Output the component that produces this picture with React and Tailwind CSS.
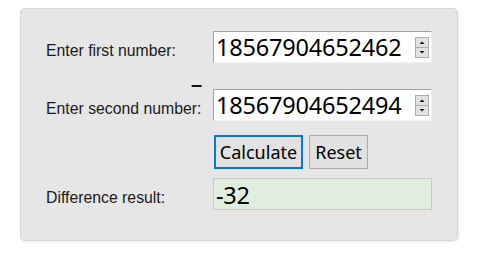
import React, { useState } from "react";

const labelFont = { fontFamily: '"Liberation Sans", Arial, sans-serif' };
const fieldFont = { fontFamily: '"Noto Sans", "Open Sans", sans-serif' };

function Spinner() {
  return (
    <svg width="14" height="21" viewBox="0 0 14 21" className="ml-auto mr-[2px] shrink-0">
      <rect x="0.5" y="0.5" width="13" height="20" fill="#e3e3e3" stroke="#acacac" />
      <line x1="0.5" y1="10.5" x2="13.5" y2="10.5" stroke="#acacac" />
      <polygon points="4.5,7 7,4.5 9.5,7" fill="#111" />
      <polygon points="4.5,14 9.5,14 7,16.5" fill="#111" />
    </svg>
  );
}

function NumberBox({ value }) {
  return (
    <div className="flex items-center w-[219px] h-[32px] bg-white border border-t-[#a3a3a3] border-l-[#a3a3a3] border-r-[#f0f0f0] border-b-[#f0f0f0]">
      <span
        className="pl-[2px] text-[23.5px] leading-[30px] tracking-[-0.2px] text-black"
        style={fieldFont}
      >
        {value}
      </span>
      <Spinner />
    </div>
  );
}

function Label({ children }) {
  return (
    <div className="w-[167px] shrink-0 pt-[11px] text-[15.8px] leading-[18px] text-[#1a1a1a]" style={labelFont}>
      {children}
    </div>
  );
}

export default function App() {
  const [first] = useState("18567904652462");
  const [second] = useState("18567904652494");
  const result = "-32";

  return (
    <div className="w-[480px] h-[255px] bg-white pt-[8px] pl-[20px]">
      <div className="w-[438px] h-[233px] rounded-[5px] border border-[#d6d6d6] bg-[#e6e6e6] shadow-[1px_1px_2px_rgba(0,0,0,0.08)] pt-[22px] pl-[25px]">
        {/* first operand */}
        <div className="flex h-[32px]">
          <Label>Enter first number:</Label>
          <NumberBox value={first} />
        </div>

        {/* operator */}
        <div className="h-[26px] pl-[145px] pt-[11px]">
          <span className="block text-[20px] leading-[20px] font-bold text-[#111]" style={labelFont}>
            –
          </span>
        </div>

        {/* second operand */}
        <div className="flex h-[32px]">
          <Label>Enter second number:</Label>
          <NumberBox value={second} />
        </div>

        {/* actions */}
        <div className="flex gap-[6px] mt-[14px] pl-[168px]" style={fieldFont}>
          <button className="w-[89px] h-[34px] bg-[#e1e1e1] border-2 border-[#0078d7] text-[18px] leading-[24px] text-black">
            Calculate
          </button>
          <button className="w-[59px] h-[34px] bg-[#e1e1e1] border border-[#adadad] text-[18px] leading-[24px] text-black">
            Reset
          </button>
        </div>

        {/* result */}
        <div className="flex h-[32px] mt-[9px]">
          <Label>Difference result:</Label>
          <div className="w-[219px] h-[32px] bg-[#dfeedf] border border-[#c8c8c8]">
            <span
              className="block pl-[2px] pt-[1px] text-[23.5px] leading-[30px] tracking-[-0.2px] text-black"
              style={fieldFont}
            >
              {result}
            </span>
          </div>
        </div>
      </div>
    </div>
  );
}
